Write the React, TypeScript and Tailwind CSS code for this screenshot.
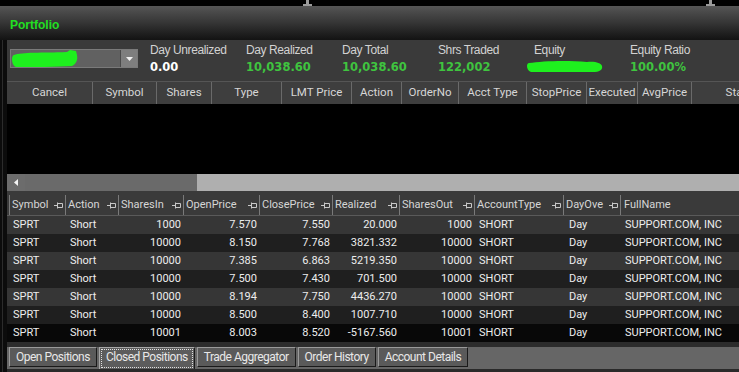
import React from "react";

const orderCols = [
  { label: "Cancel", w: "w-[86px]" },
  { label: "Symbol", w: "w-[64px]" },
  { label: "Shares", w: "w-[55px]" },
  { label: "Type", w: "w-[70px]" },
  { label: "LMT Price", w: "w-[70px]" },
  { label: "Action", w: "w-[50px]" },
  { label: "OrderNo", w: "w-[57px]" },
  { label: "Acct Type", w: "w-[68px]" },
  { label: "StopPrice", w: "w-[60px]" },
  { label: "Executed", w: "w-[51px]" },
  { label: "AvgPrice", w: "w-[54px]" },
  { label: "Status", w: "w-[100px]" },
];

const closedCols = [
  { label: "Symbol", w: "w-[56px]" },
  { label: "Action", w: "w-[53px]" },
  { label: "SharesIn", w: "w-[65px]" },
  { label: "OpenPrice", w: "w-[76px]" },
  { label: "ClosePrice", w: "w-[73px]" },
  { label: "Realized", w: "w-[67px]" },
  { label: "SharesOut", w: "w-[75px]" },
  { label: "AccountType", w: "w-[89px]" },
  { label: "DayOve", w: "w-[57px]" },
];

const rows = [
  ["1000", "7.570", "7.550", "20.000", "1000"],
  ["10000", "8.150", "7.768", "3821.332", "10000"],
  ["10000", "7.385", "6.863", "5219.350", "10000"],
  ["10000", "7.500", "7.430", "701.500", "10000"],
  ["10000", "8.194", "7.750", "4436.270", "10000"],
  ["10000", "8.500", "8.400", "1007.710", "10000"],
  ["10001", "8.003", "8.520", "-5167.560", "10001"],
];

const rowBg = ["bg-[#363636]", "bg-[#1f1f1f]", "bg-[#363636]", "bg-[#1f1f1f]", "bg-[#363636]", "bg-[#1f1f1f]", "bg-[#080808]"];

const stats = [
  { label: "Day Unrealized", value: "0.00", green: false },
  { label: "Day Realized", value: "10,038.60", green: true },
  { label: "Day Total", value: "10,038.60", green: true },
  { label: "Shrs Traded", value: "122,002", green: true },
  { label: "Equity", value: "", green: true },
  { label: "Equity Ratio", value: "100.00%", green: true },
];

const tabs = ["Open Positions", "Closed Positions", "Trade Aggregator", "Order History", "Account Details"];

function Pin() {
  return (
    <svg width="9" height="7" viewBox="0 0 9 7" className="shrink-0">
      <path d="M0 3.5H3M3.5 0.5V6.5M3.5 1.5H8.5V5.5H3.5" fill="none" stroke="#c8c8c8" strokeWidth="1" />
    </svg>
  );
}

function GreenScribble({ w, h, d }: { w: number; h: number; d: string }) {
  return (
    <svg width={w} height={h} viewBox={`0 0 ${w} ${h}`}>
      <path d={d} fill="#1ef01e" />
    </svg>
  );
}

export default function App() {
  return (
    <div className="w-[739px] h-[372px] overflow-hidden bg-black flex flex-col font-['Roboto',sans-serif] text-[11px]">
      {/* top strip */}
      <div className="relative h-[6px] bg-black shrink-0">
        <div className="absolute left-[306px] top-0 w-[3px] h-[5px] bg-[#9a9a9a]" />
        <div className="absolute left-[303px] top-[4px] w-[9px] h-[2px] bg-[#9a9a9a]" />
        <div className="absolute left-[709px] top-0 w-[3px] h-[5px] bg-[#9a9a9a]" />
        <div className="absolute left-[706px] top-[4px] w-[9px] h-[2px] bg-[#9a9a9a]" />
      </div>

      {/* title bar */}
      <div className="h-[34px] shrink-0 flex items-center pl-[10px] bg-gradient-to-b from-[#555555] via-[#353535] to-[#131313]">
        <span className="font-['Liberation_Sans',sans-serif] font-bold text-[12px] text-[#22e022] pt-[3px]">Portfolio</span>
      </div>

      <div className="flex flex-1 min-h-0">
        {/* left gutter */}
        <div className="w-[7px] shrink-0 bg-[#0c0c0c] flex">
          <div className="ml-[2px] w-px bg-[#2c2c2c]" />
        </div>

        <div className="flex-1 flex flex-col min-w-0">
          {/* stats */}
          <div className="h-[41px] shrink-0 bg-[#3a3a3a] flex items-start">
            <div className="ml-[3px] mt-[9px] w-[128px] h-[19px] flex bg-[#616161] border border-[#7a7a7a]">
              <div className="flex-1 flex items-center pl-px">
                <GreenScribble
                  w={67}
                  h={18}
                  d="M2 5 C10 2 30 3 55 2 L58 0 L64 1 L65 5 C66 10 64 14 60 16 C45 17 20 17 4 17 C1 16 0 12 0 9 C0 7 1 5 2 5Z"
                />
              </div>
              <div className="w-[17px] bg-[#7e7e7e] border-l border-[#4a4a4a] flex items-center justify-center">
                <svg width="7" height="4" viewBox="0 0 7 4">
                  <path d="M0 0H7L3.5 4Z" fill="#f2f2f2" />
                </svg>
              </div>
            </div>
            <div className="ml-[12px] flex">
              {stats.map((s) => (
                <div key={s.label} className="w-[96px] flex flex-col pt-[2px]">
                  <span className="text-[12px] leading-[16px] text-[#d2d2d2] font-['Liberation_Sans',sans-serif] tracking-[-0.4px]">{s.label}</span>
                  {s.value ? (
                    <span
                      className={`font-['DejaVu_Sans',sans-serif] font-bold text-[11.5px] leading-[18px] ${
                        s.green ? "text-[#3fc43f]" : "text-white"
                      }`}
                    >
                      {s.value}
                    </span>
                  ) : (
                    <div className="ml-[-7px] mt-[2px]">
                      <GreenScribble
                        w={76}
                        h={13}
                        d="M2 3 C15 1 40 0 60 2 C68 1 74 3 75 6 C76 10 72 12 66 12 C50 12 20 12 4 12 C1 11 0 8 0 6 C0 4 1 3 2 3Z"
                      />
                    </div>
                  )}
                </div>
              ))}
            </div>
          </div>

          {/* orders header */}
          <div className="h-[23px] shrink-0 flex bg-[#3e3e3e] border-t border-[#555555] text-[#d6d6d6] text-[11.5px]">
            {orderCols.map((c, i) => (
              <div
                key={c.label}
                className={`${c.w} shrink-0 flex items-center justify-center ${i < orderCols.length - 1 ? "border-r border-[#6a6a6a]" : ""}`}
              >
                {c.label}
              </div>
            ))}
          </div>

          {/* empty orders area */}
          <div className="h-[70px] shrink-0 bg-black" />

          {/* scrollbar */}
          <div className="h-[17px] shrink-0 flex bg-[#afafaf]">
            <div className="w-[18px] bg-[#6c6c6c] flex items-center justify-center">
              <svg width="4" height="7" viewBox="0 0 4 7">
                <path d="M4 0V7L0 3.5Z" fill="#f4f4f4" />
              </svg>
            </div>
            <div className="w-[172px] bg-[#6a6a6a]" />
          </div>

          <div className="h-[4px] shrink-0 bg-[#3a3a3a]" />

          {/* closed positions header */}
          <div className="h-[21px] shrink-0 flex bg-[#3a3a3a] pl-[2px] text-[#d6d6d6] border-b border-[#5a5a5a]">
            <div className="flex border-l border-[#7a7a7a] flex-1">
              {closedCols.map((c) => (
                <div key={c.label} className={`${c.w} shrink-0 flex items-center justify-between pl-[2px] pr-[2px] border-r border-[#7a7a7a]`}>
                  <span>{c.label}</span>
                  <Pin />
                </div>
              ))}
              <div className="flex-1 flex items-center pl-[3px]">FullName</div>
            </div>
          </div>

          {/* rows */}
          <div className="flex flex-col shrink-0 text-[#ededed]">
            {rows.map((r, i) => (
              <div key={i} className={`h-[18px] flex items-center pl-[2px] ${rowBg[i]}`}>
                <div className="w-[56px] pl-[4px]">SPRT</div>
                <div className="w-[53px] pl-[5px]">Short</div>
                <div className="w-[65px] text-right pr-[2px]">{r[0]}</div>
                <div className="w-[76px] text-right pr-[2px]">{r[1]}</div>
                <div className="w-[73px] text-right pr-[2px]">{r[2]}</div>
                <div className="w-[67px] text-right pr-[2px]">{r[3]}</div>
                <div className="w-[75px] text-right pr-[2px]">{r[4]}</div>
                <div className="w-[89px] pl-[5px]">SHORT</div>
                <div className="w-[57px] pl-[6px]">Day</div>
                <div className="flex-1 pl-[5px] whitespace-nowrap">SUPPORT.COM, INC</div>
              </div>
            ))}
          </div>

          <div className="flex-1 bg-[#2c2c2c]" />

          {/* tabs */}
          <div className="h-[22px] shrink-0 flex bg-[#666666] pl-[2px] text-[#e8e8e8] text-[12px] tracking-[-0.5px]">
            {tabs.map((t, i) =>
              i === 1 ? (
                <div key={t} className="ml-[2px] h-full bg-[#5c5c5c] border-t border-l border-[#a8a8a8] border-r border-r-[#1a1a1a] p-[1px]">
                  <div className="h-full border border-dotted border-[#e0e0e0] px-[4px] flex items-end pb-[1px]">{t}</div>
                </div>
              ) : (
                <div
                  key={t}
                  className={`${i > 0 ? "ml-[2px]" : ""} h-[20px] bg-[#5a5a5a] border-t border-l border-[#9a9a9a] border-r border-b border-r-[#1a1a1a] border-b-[#1a1a1a] px-[6px] flex items-center`}
                >
                  {t}
                </div>
              )
            )}
          </div>
          <div className="h-[3px] shrink-0 bg-[#2a2a2a]" />
        </div>
      </div>
    </div>
  );
}
